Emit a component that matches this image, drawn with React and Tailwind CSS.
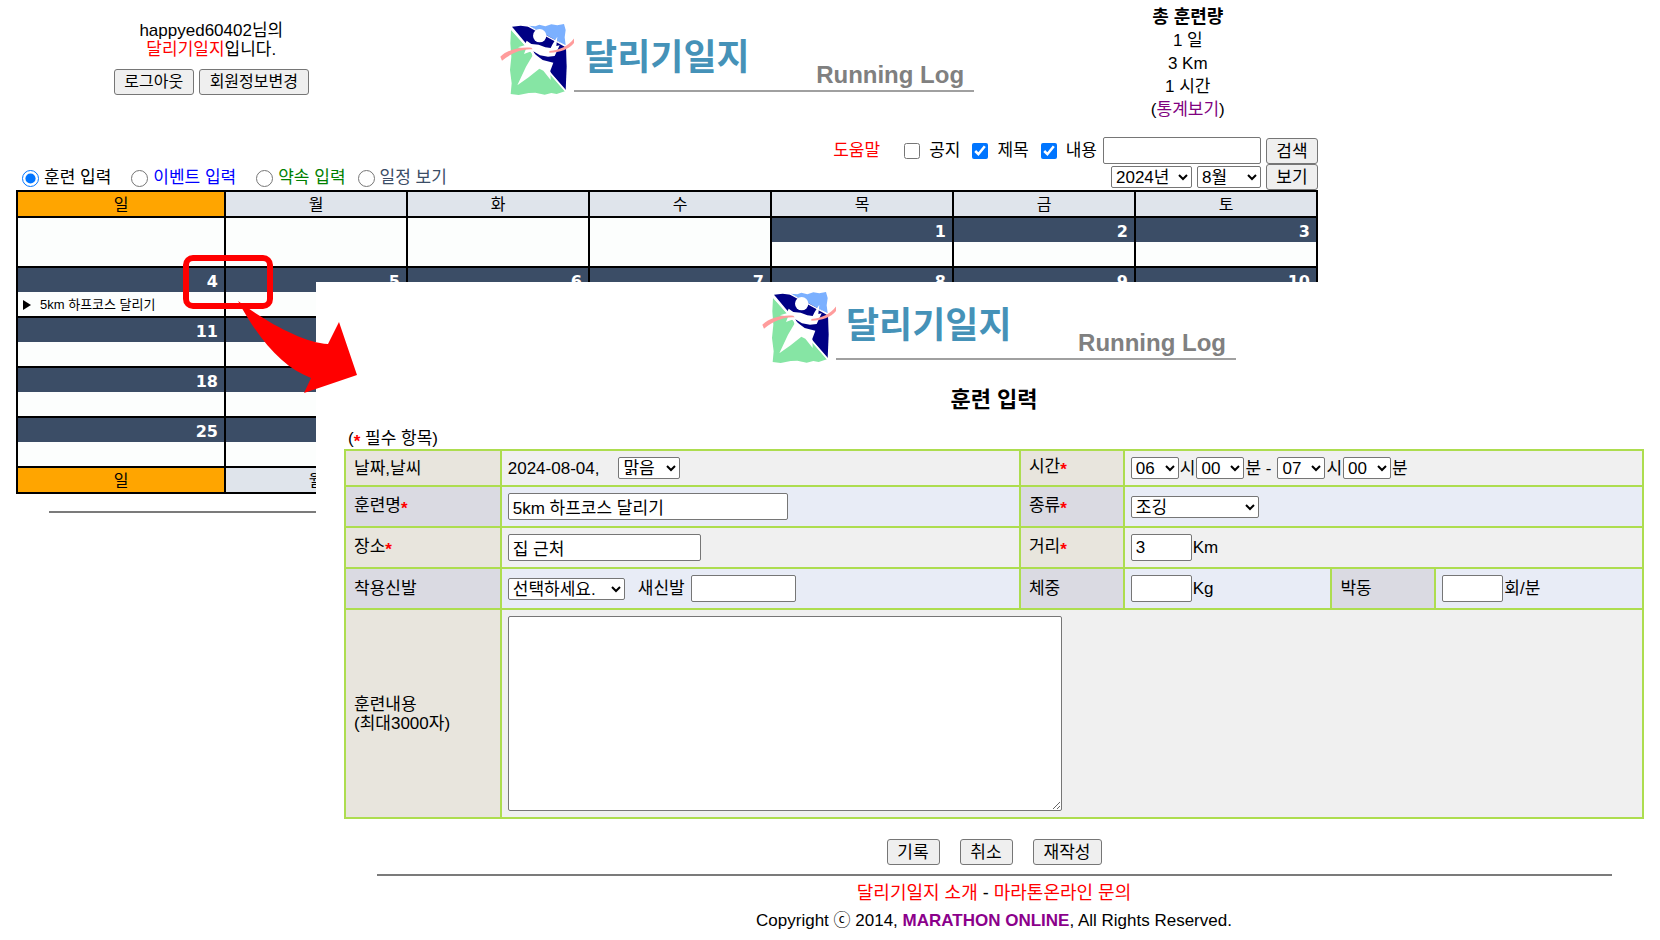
import { useState } from 'react';

const DAYS = ['일', '월', '화', '수', '목', '금', '토'];
// null is a cell outside the month, '' a day whose number stays behind the form window
const WEEKS = [
  [null, null, null, null, 1, 2, 3],
  [4, 5, 6, 7, 8, 9, 10],
  [11, '', '', '', '', '', ''],
  [18, '', '', '', '', '', ''],
  [25, '', '', '', '', '', ''],
];
const ENTRIES = { 4: '5km 하프코스 달리기' };

const MODES = [
  { id: 'train', label: '훈련 입력', className: 'text-black mr-5' },
  { id: 'event', label: '이벤트 입력', className: 'text-[#0000ff] mr-5' },
  { id: 'promise', label: '약속 입력', className: 'text-[#008000] mr-3' },
  { id: 'schedule', label: '일정 보기', className: 'text-[#3b4d66]' },
];

const inputClass = 'h-[27px] bg-white border border-[#767676] rounded-xs px-1 text-black outline-none';
const selectClass = 'h-[22px] bg-white border border-[#767676] rounded-xs text-black outline-none';
const buttonClass = 'h-[26px] bg-[#efefef] border border-[#767676] rounded-[3px] text-black';

function RunnerMark() {
  return (
    <svg viewBox="6 9 222 216" className="w-[74px] h-[72px] shrink-0" aria-hidden="true">
      <path d="M42 20 L68 17 L92 20 L112 28 L160 50 L204 82 L206 140 L203 212 Z" fill="#000084" />
      <path d="M92 17 L112 19 L124 14 L142 19 L160 13 L178 16 L198 12 L203 30 L200 52 L203 76 L176 62 L146 46 L112 28 Z" fill="#7bb0ff" />
      <path d="M39 30 L80 75 L120 120 L201 214 L176 222 L160 219 L140 224 L112 218 L92 219 L62 225 L38 222 L41 190 L36 150 L40 110 L37 70 Z" fill="#86e5a4" />
      <path d="M38 24 L204 214" stroke="#fff" strokeWidth="5" />
      <path d="M90 18 L204 80" stroke="#fff" strokeWidth="4" />
      <circle cx="125" cy="47" r="20" fill="#fff" />
      <path d="M60 82 L80 76 L86 62 L100 72 L122 74 L142 82 L158 84 L164 72 L178 50 L175 78 L185 76 L170 108 L150 110 L126 106 L106 94 L110 102 L134 120 L166 128 L157 152 L158 180 L136 152 L124 146 L92 172 L58 196 L84 140 L103 108 L100 94 L78 102 L84 86 Z" fill="#fff" />
      <path d="M7 110 C30 88 68 80 100 83 L104 88 C72 86 42 98 12 122 Z" fill="#ff9c9c" />
      <path d="M154 93 C188 90 212 78 230 53 L229 68 C214 88 186 98 154 98 Z" fill="#ff9c9c" />
    </svg>
  );
}

function Logo() {
  return (
    <div className="flex pl-[10px]">
      <RunnerMark />
      <div className="flex w-[400px] h-[69px] items-end justify-between border-b-2 border-[#a0a0a0] pl-[10px] pr-[10px]">
        <span className="font-['Noto_Sans_CJK_KR',sans-serif] font-bold text-[36px] leading-9 text-[#4592b8] mb-[18px]">달리기일지</span>
        <span className="font-bold text-2xl leading-6 text-[#808080] mb-[3px]">Running Log</span>
      </div>
    </div>
  );
}

function DayHeader({ days }) {
  return (
    <tr>
      {days.map((d, i) => (
        <th key={i} className={`border-2 border-black p-0 pt-[2px] h-6 text-base leading-[22px] font-normal ${i === 0 ? 'bg-[#ffa500]' : 'bg-[#dfe4eb]'}`}>
          {d}
        </th>
      ))}
    </tr>
  );
}

function Calendar() {
  return (
    <table className="w-full table-fixed border-collapse">
      <colgroup>
        <col className="w-[16%]" />
        {DAYS.slice(1).map(d => <col key={d} className="w-[14%]" />)}
      </colgroup>
      <thead><DayHeader days={DAYS} /></thead>
      <tbody>
        {WEEKS.map((week, w) => (
          <tr key={w}>
            {week.map((day, i) => (
              <td key={i} className="border-2 border-black p-0 bg-[#fcfefd]">
                {day !== null && (
                  <div className="h-6 bg-[#3b4d66] pr-[6px] text-right font-['DejaVu_Sans',sans-serif] font-bold text-base leading-7 text-white">{day}</div>
                )}
                <div className={day !== null ? 'h-6' : 'h-12'}>
                  {ENTRIES[day] && (
                    <a href="#entry" className="flex items-center gap-2 pl-1 text-[13px] leading-[26px]">
                      <svg viewBox="0 0 10 10" className="w-[10px] h-[10px]"><path d="M1 0 L9 5 L1 10 Z" /></svg>
                      {ENTRIES[day]}
                    </a>
                  )}
                </div>
              </td>
            ))}
          </tr>
        ))}
      </tbody>
      <tfoot><DayHeader days={['일', '월', '', '', '', '', '']} /></tfoot>
    </table>
  );
}

function CalendarPage() {
  const [mode, setMode] = useState('train');

  return (
    <div className="ml-4 max-w-[1302px]">
      <header className="grid grid-cols-[30%_50%_20%] h-[137px]">
        <div className="pt-[21px] text-center leading-[19px]">
          <p>happyed60402님의</p>
          <p><a href="#log" className="text-[#ff0000]">달리기일지</a>입니다.</p>
          <div className="mt-[10px] flex justify-center gap-[5px] text-base">
            <button className={`${buttonClass} w-20`}>로그아웃</button>
            <button className={`${buttonClass} w-[110px]`}>회원정보변경</button>
          </div>
        </div>
        <div className="flex justify-center pt-[23px]"><Logo /></div>
        <div className="pt-[6px] text-center leading-[23px]">
          <p className="font-bold text-lg leading-[23px]">총 훈련량</p>
          <p>1 일</p>
          <p>3 Km</p>
          <p>1 시간</p>
          <p>(<a href="#stats" className="text-[#800080]">통계보기</a>)</p>
        </div>
      </header>

      <div className="flex items-end justify-between">
        <div className="flex pl-[6px] leading-6">
          {MODES.map(m => (
            <label key={m.id} className={`flex items-center gap-[5px] ${m.className}`}>
              <input type="radio" name="mode" className="w-[17px] h-[17px]" checked={mode === m.id} onChange={() => setMode(m.id)} />
              {m.label}
            </label>
          ))}
        </div>
        <div className="flex flex-col items-end">
          <div className="flex items-center">
            <a href="#help" className="text-[#ff0000] mr-6">도움말</a>
            <label className="flex items-center gap-[9px] mr-3"><input type="checkbox" className="w-4 h-4" />공지</label>
            <label className="flex items-center gap-[9px] mr-3"><input type="checkbox" className="w-4 h-4" defaultChecked />제목</label>
            <label className="flex items-center gap-[9px] mr-[6px]"><input type="checkbox" className="w-4 h-4" defaultChecked />내용</label>
            <input aria-label="검색어" className={`${inputClass} w-[158px] mr-[5px]`} />
            <button className={`${buttonClass} w-[52px]`}>검색</button>
          </div>
          <div className="flex items-center gap-[5px]">
            <select aria-label="연도" className={`${selectClass} w-[81px]`}><option>2024년</option></select>
            <select aria-label="월" className={`${selectClass} w-16`}><option>8월</option></select>
            <button className={`${buttonClass} w-[52px]`}>보기</button>
          </div>
        </div>
      </div>

      <Calendar />
      <hr className="mx-auto mt-[17px] w-[95%] border-t-2 border-[#7b7b7b]" />
    </div>
  );
}

const Star = () => <span className="text-[#ff0000] font-bold align-[-3px]">*</span>;

function Th({ id, odd, required, children }) {
  return (
    <th className={`border-2 border-[#addd4f] p-[6px] pl-2 text-left font-normal ${odd ? 'bg-[#e8e5dd]' : 'bg-[#dadae2]'}`}>
      <label htmlFor={id}>{children}{required && <Star />}</label>
    </th>
  );
}

function Td({ odd, colSpan, children }) {
  return (
    <td colSpan={colSpan} className={`border-2 border-[#addd4f] p-[6px] ${odd ? 'bg-[#f0f0f0]' : 'bg-[#e8ecf6]'}`}>
      <div className="flex items-center gap-px">{children}</div>
    </td>
  );
}

function TimeSelect({ id, label, value }) {
  return (
    <select id={id} aria-label={label} className={`${selectClass} w-12`}><option>{value}</option></select>
  );
}

function TrainingForm() {
  const [form, setForm] = useState({
    name: '5km 하프코스 달리기',
    place: '집 근처',
    distance: '3',
    newShoes: '',
    weight: '',
    pulse: '',
    content: '',
  });
  const bind = key => ({ id: key, value: form[key], onChange: e => setForm({ ...form, [key]: e.target.value }) });

  return (
    <form onSubmit={e => e.preventDefault()}>
      <p className="h-5 pl-1 leading-5">(<Star /> 필수 항목)</p>
      <table className="w-full table-fixed border-collapse leading-[19px]">
        <colgroup>
          <col className="w-[12%]" />
          <col className="w-[40%]" />
          <col className="w-[8%]" />
          <col className="w-[16%]" />
          <col className="w-[8%]" />
          <col className="w-[16%]" />
        </colgroup>
        <tbody>
          <tr>
            <Th id="weather" odd>날짜,날씨</Th>
            <Td odd>
              <span className="mr-[18px]">2024-08-04,</span>
              <select id="weather" className={`${selectClass} w-[62px]`}><option>맑음</option></select>
            </Td>
            <Th id="startHour" odd required>시간</Th>
            <Td odd colSpan={3}>
              <TimeSelect id="startHour" label="시작 시" value="06" />시
              <TimeSelect label="시작 분" value="00" /><span className="mr-[5px]">분 -</span>
              <TimeSelect label="종료 시" value="07" />시
              <TimeSelect label="종료 분" value="00" />분
            </Td>
          </tr>
          <tr>
            <Th id="name" required>훈련명</Th>
            <Td><input {...bind('name')} className={`${inputClass} w-[280px]`} /></Td>
            <Th id="kind" required>종류</Th>
            <Td colSpan={3}>
              <select id="kind" className={`${selectClass} w-32`}><option>조깅</option></select>
            </Td>
          </tr>
          <tr>
            <Th id="place" odd required>장소</Th>
            <Td odd><input {...bind('place')} className={`${inputClass} w-[193px]`} /></Td>
            <Th id="distance" odd required>거리</Th>
            <Td odd colSpan={3}><input {...bind('distance')} className={`${inputClass} w-[61px]`} />Km</Td>
          </tr>
          <tr>
            <Th id="shoes">착용신발</Th>
            <Td>
              <select id="shoes" className={`${selectClass} w-[117px] mr-3`}><option>선택하세요.</option></select>
              <label htmlFor="newShoes" className="mr-[5px]">새신발</label>
              <input {...bind('newShoes')} className={`${inputClass} w-[105px]`} />
            </Td>
            <Th id="weight">체중</Th>
            <Td><input {...bind('weight')} className={`${inputClass} w-[61px]`} />Kg</Td>
            <Th id="pulse">박동</Th>
            <Td><input {...bind('pulse')} className={`${inputClass} w-[61px]`} />회/분</Td>
          </tr>
          <tr>
            <Th id="content" odd>훈련내용<br />(최대3000자)</Th>
            <Td odd colSpan={5}>
              <textarea {...bind('content')} className="block w-[554px] h-[195px] bg-white border border-[#767676] rounded-xs p-1 outline-none" />
            </Td>
          </tr>
        </tbody>
      </table>
      <div className="mt-5 flex justify-center gap-5">
        <button type="submit" className={`${buttonClass} w-[53px]`}>기록</button>
        <button type="button" className={`${buttonClass} w-[53px]`}>취소</button>
        <button type="reset" className={`${buttonClass} w-[69px]`}>재작성</button>
      </div>
    </form>
  );
}

function TrainingWindow() {
  return (
    <section className="absolute left-[316px] top-[282px] right-0 bottom-0 bg-white pl-7 pr-4 pt-[9px]">
      <div className="flex justify-center"><Logo /></div>
      <h1 className="mt-[23px] mb-[15px] text-center text-[22px] leading-7 font-bold">훈련 입력</h1>
      <TrainingForm />
      <hr className="mx-auto mt-[9px] w-[95%] border-t-2 border-[#7b7b7b]" />
      <footer className="mt-1 text-center leading-[27px]">
        <p className="text-lg leading-[27px]">
          <a href="#about" className="text-[#ff0000]">달리기일지 소개</a> - <a href="#contact" className="text-[#ff0000]">마라톤온라인 문의</a>
        </p>
        <p>Copyright ⓒ 2014, <a href="#online" className="font-bold text-[#8b008b]">MARATHON ONLINE</a>, All Rights Reserved.</p>
      </footer>
    </section>
  );
}

// red box round the clicked date and the arrow to the form it opens
function Callout() {
  return (
    <>
      <div className="absolute left-[183px] top-[255px] w-[90px] h-[54px] border-[6px] border-[#ff0000] rounded-[10px]" />
      <svg viewBox="0 0 120 94" className="absolute left-[238px] top-[300px] w-[120px] h-[94px]" aria-hidden="true">
        <path d="M0 1 C28 22 66 43 90 44 L101 22 L119 75 L66 93 L73 78 C46 68 22 42 0 1 Z" fill="#ff0000" />
      </svg>
    </>
  );
}

export default function App() {
  return (
    <main className="relative min-h-screen overflow-hidden bg-white text-black text-[17px] font-['Liberation_Sans','Noto_Sans_CJK_KR',sans-serif]">
      <CalendarPage />
      <TrainingWindow />
      <Callout />
    </main>
  );
}
